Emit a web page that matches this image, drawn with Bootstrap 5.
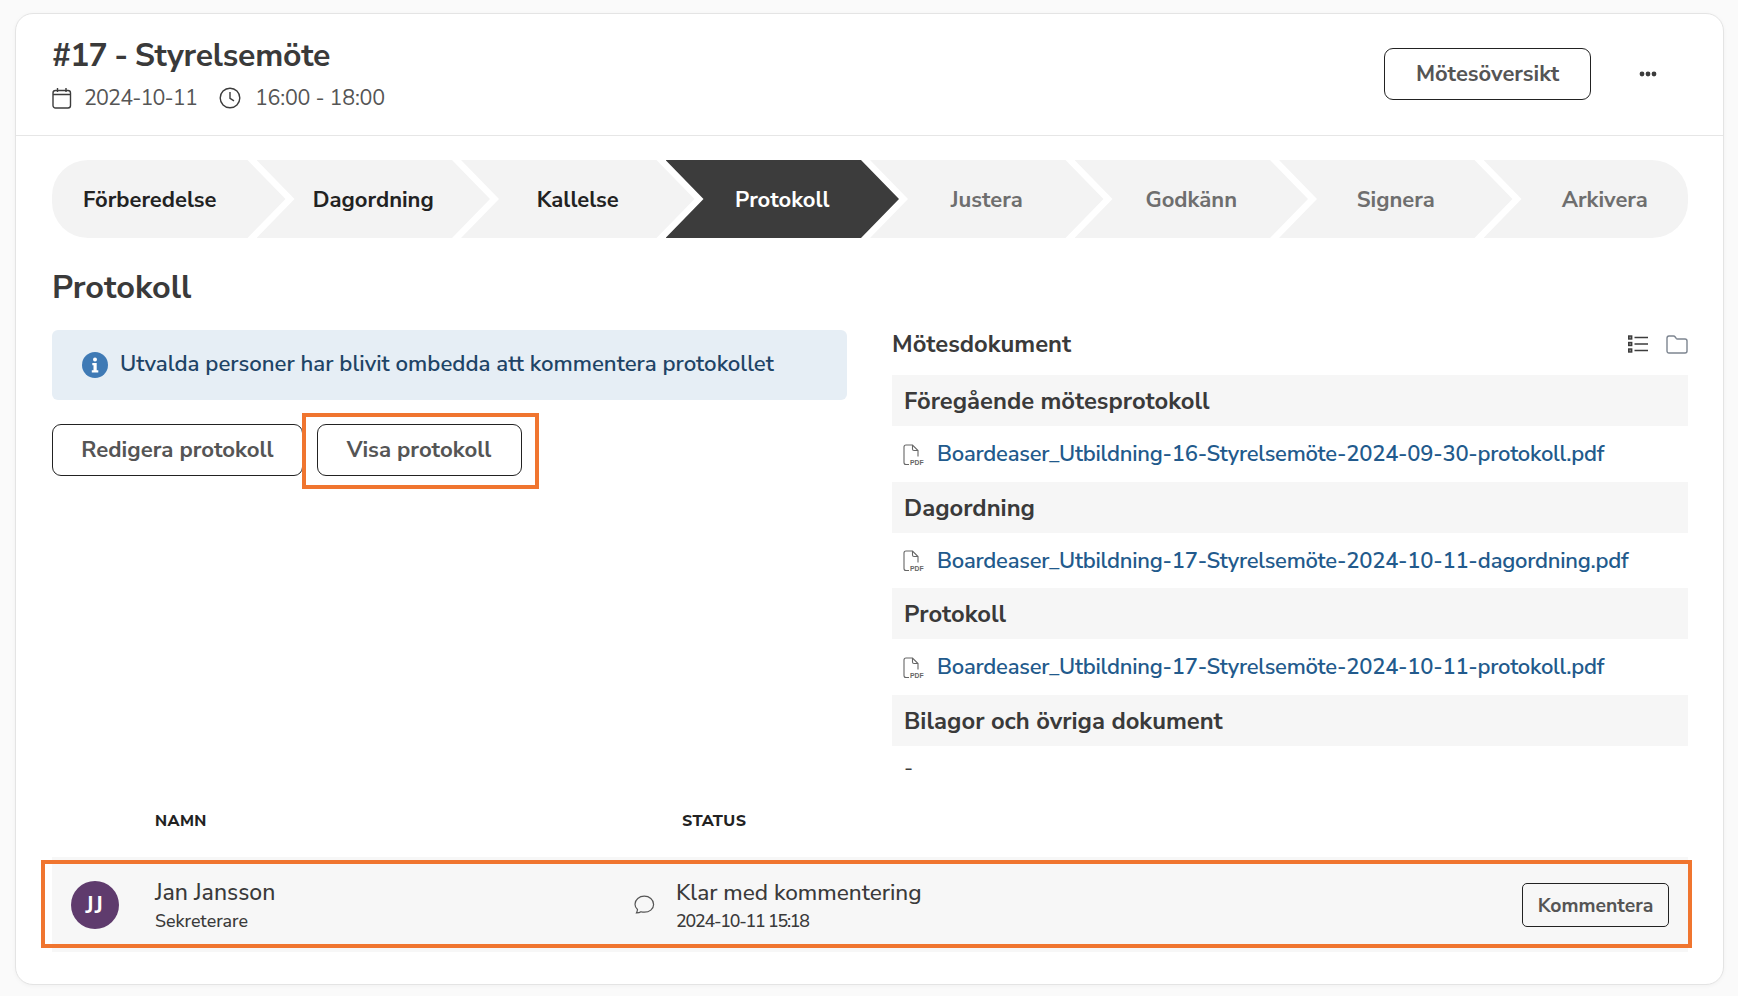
<!DOCTYPE html>
<html lang="sv">
<head>
<meta charset="utf-8">
<title>Protokoll</title>
<link href="https://cdn.jsdelivr.net/npm/bootstrap@5.3.0/dist/css/bootstrap.min.css" rel="stylesheet">
<style>
body{background:#fafafa;font-family:"Nunito Sans","Lato","Noto Sans",sans-serif;color:#3c3c3c;padding:13px 14px 12px 15px;height:996px;overflow:hidden}
.shell{background:#fff;border:1px solid #e4e4e4;border-radius:18px;box-shadow:0 1px 4px rgba(0,0,0,.04);height:972px;width:1709px}
.shell-head{height:122px;border-bottom:1px solid #e6e6e6;padding:0 66px 0 36px}
.meet-title{font-size:32px;letter-spacing:-.2px;font-weight:700;line-height:38px;margin:0 0 9px;color:#3a3a3a}
.title-num{letter-spacing:-1px}
.meet-meta{font-size:21.5px;color:#555;line-height:28px;gap:12px}
.num-text{letter-spacing:-.85px}
.time-text{letter-spacing:-.25px;margin-left:2px}
.clock-ico{margin-left:10px}
.head-right{margin-bottom:2px}
.out-btn{background:transparent;border:1px solid #222;border-radius:9px;color:#555;font-weight:700;font-size:22px;padding:0;width:207px;height:52px;line-height:50px}
.out-btn:hover{background:transparent;color:#555;border-color:#222}
.dots-btn{margin-left:48px;width:18px}
.steps{display:flex;height:78px;margin:24px 35px 0 36px;border-radius:36px;overflow:hidden}
.step{flex:0 0 233.5px;margin-right:-29px;background:#f3f3f3;display:flex;align-items:center;justify-content:center;font-size:22px;font-weight:700;padding:2px 38px 0;color:#222;clip-path:polygon(0 0,calc(100% - 38px) 0,100% 50%,calc(100% - 38px) 100%,0 100%,38px 50%)}
.step.first{clip-path:polygon(0 0,calc(100% - 38px) 0,100% 50%,calc(100% - 38px) 100%,0 100%);padding-left:0}
.step.last{flex:1 1 0;margin-right:0;padding-right:0;clip-path:polygon(0 0,100% 0,100% 100%,0 100%,38px 50%)}
.step.now{background:#3c3c3c;color:#fff}
.step.later{color:#6e6e6e}
.page-head{font-size:32.5px;font-weight:700;line-height:40px;margin:29px 36px 23px;color:#3a3a3a}
.doc-row{--bs-gutter-x:44px;margin:0 13px 0 14px;height:471px}
.note{background:#e6eef5;border-radius:6px;height:70px;padding:0 30px;margin-right:1px;font-size:22.2px;color:#1e4466;gap:12px;font-weight:600}
.line-btn{background:#fff;border:1px solid #222;border-radius:9px;color:#555;font-weight:700;font-size:22.2px;height:52px;padding:0;line-height:50px}
.line-btn:hover{background:#fff;color:#555;border-color:#222}
.edit-btn{width:251px}
.view-btn{width:205px;margin-left:13.5px}
.btn-line{margin-top:24px;position:relative}
.mark-frame{position:absolute;border:4px solid #f0752f;pointer-events:none}
.frame-view{left:250px;top:-11px;width:237px;height:76px}
.docs-head{height:45px;font-size:23.8px;font-weight:700;color:#3a3a3a;line-height:28px;padding-bottom:17px}
.view-icons{gap:18px}
.sec-bar{background:#f6f6f6;height:51px;line-height:53px;padding-left:12px;font-size:23.8px;font-weight:700;color:#3a3a3a}
.sec-item{height:55.5px;padding-left:11px;padding-top:2px;gap:12px;font-size:22px;letter-spacing:-.24px;font-weight:600}
.sec-item a{color:#225a8c;text-decoration:none}
.sec-none{padding-left:12px;font-size:21.5px;line-height:44px}
.col-heads{margin:0 35px 0 36px;height:56px;padding-bottom:16px;font-size:16px;font-weight:800;color:#222;text-transform:uppercase;letter-spacing:.4px}
.name-head{width:630px;padding-left:103px}
.person{position:relative;margin:0 35px 0 36px;height:95px;background:#f7f7f7}
.frame-row{left:-11px;top:3px;width:1651px;height:88px}
.avatar{width:48px;height:48px;border-radius:50%;background:#5f3b6d;color:#fff;font-weight:700;font-size:23px;letter-spacing:1.5px;margin-left:19px;padding-top:3px;flex:none}
.person-name{width:479px;margin-left:36px;padding-top:3px}
.big-text{font-size:22.6px;line-height:26px;color:#3a3a3a;font-weight:500}
.big-name{font-size:23px}
.small-text{font-size:17.8px;line-height:22px;margin-top:4px;color:#3a3a3a;font-weight:500}
.date-text{letter-spacing:-1.2px}
.status-wrap{margin-left:21px;padding-top:3px}
.note-btn{margin-left:auto;margin-right:19px;width:147px;height:44px;border:1px solid #222;border-radius:5px;background:transparent;color:#555;font-size:19.4px;font-weight:700;padding:0;line-height:44px}
.note-btn:hover{background:transparent;color:#555;border-color:#222}
</style>
</head>
<body>
<div class="shell">
  <div class="shell-head d-flex align-items-center justify-content-between">
    <div>
      <h1 class="meet-title"><span class="title-num">#17 - </span>Styrelsemöte</h1>
      <div class="meet-meta d-flex align-items-center">
        <svg width="20" height="22" viewBox="0 0 20 22" fill="none" stroke="#3c3c3c" stroke-width="1.4"><rect x="1" y="3.5" width="17.5" height="17.5" rx="2.5"/><path d="M1 7.5h17.5M5.5 1v4M14 1v4"/></svg>
        <span class="num-text">2024-10-11</span>
        <svg class="clock-ico" width="22" height="22" viewBox="0 0 22 22" fill="none" stroke="#3c3c3c" stroke-width="1.4"><circle cx="11" cy="11" r="9.8"/><path d="M11 5v6.3l4 2.6"/></svg>
        <span class="time-text">16:00 - 18:00</span>
      </div>
    </div>
    <div class="head-right d-flex align-items-center">
      <button class="btn out-btn" type="button">Mötesöversikt</button>
      <div class="dots-btn d-flex"><svg width="18" height="6" viewBox="0 0 18 6" fill="#3c3c3c"><circle cx="3" cy="3" r="2.4"/><circle cx="9" cy="3" r="2.4"/><circle cx="15" cy="3" r="2.4"/></svg></div>
    </div>
  </div>

  <div class="steps">
    <div class="step first">Förberedelse</div>
    <div class="step">Dagordning</div>
    <div class="step">Kallelse</div>
    <div class="step now">Protokoll</div>
    <div class="step later">Justera</div>
    <div class="step later">Godkänn</div>
    <div class="step later">Signera</div>
    <div class="step later last">Arkivera</div>
  </div>

  <h2 class="page-head">Protokoll</h2>

  <div class="row doc-row">
    <div class="col-6">
      <div class="note d-flex align-items-center">
        <svg width="26" height="26" viewBox="0 0 26 26"><circle cx="13" cy="13" r="13" fill="#3f7ab5"/><circle cx="13" cy="7.6" r="2" fill="#fff"/><path d="M10.3 11h4.4v7.2h1.6v2.2H9.8v-2.2h1.7v-5h-1.2z" fill="#fff"/></svg>
        <span>Utvalda personer har blivit ombedda att kommentera protokollet</span>
      </div>
      <div class="btn-line d-flex">
        <button class="btn line-btn edit-btn" type="button">Redigera protokoll</button>
        <button class="btn line-btn view-btn" type="button">Visa protokoll</button>
        <div class="mark-frame frame-view"></div>
      </div>
    </div>
    <div class="col-6">
      <div class="docs-head d-flex justify-content-between align-items-center">
        <span>Mötesdokument</span>
        <span class="view-icons d-flex align-items-center">
          <svg width="20" height="18" viewBox="0 0 20 18" fill="none" stroke="#3c3c3c" stroke-width="1.4"><path d="M6.5 2.5H20M6.5 9H20M6.5 15.5H20"/><rect x=".7" y="1" width="3" height="3" fill="#888"/><rect x=".7" y="7.5" width="3" height="3" fill="#888"/><rect x=".7" y="14" width="3" height="3" fill="#888"/></svg>
          <svg width="22" height="19" viewBox="0 0 22 19" fill="none" stroke="#7d8590" stroke-width="1.4"><path d="M1 3.2C1 1.900 1.900 1 3 1h4.500c.8 0 1.200.3 1.700 1l1 1.400c.3.4.7.6 1.200.6H19c1.200 0 2 .9 2 2v10c0 1.200-.8 2-2 2H3c-1.200 0-2-.8-2-2z"/></svg>
        </span>
      </div>
      <div class="sec-bar">Föregående mötesprotokoll</div>
      <div class="sec-item d-flex align-items-center">
        <svg width="22" height="22" viewBox="0 0 22 22" fill="none" stroke="#666" stroke-width="1.1"><path d="M6 20.500H3c-1.200 0-2-.8-2-2V3c0-1.200.8-2 2-2h6.500L15 6.500v6M9.500 1v4c0 1 .6 1.500 1.500 1.500h4"/><text x="7" y="20.800" font-size="6.800" letter-spacing="0" font-family="Liberation Sans,sans-serif" font-weight="700" fill="#666" stroke="none">PDF</text></svg>
        <a href="#">Boardeaser_Utbildning-16-Styrelsemöte-2024-09-30-protokoll.pdf</a>
      </div>
      <div class="sec-bar">Dagordning</div>
      <div class="sec-item d-flex align-items-center">
        <svg width="22" height="22" viewBox="0 0 22 22" fill="none" stroke="#666" stroke-width="1.1"><path d="M6 20.500H3c-1.200 0-2-.8-2-2V3c0-1.200.8-2 2-2h6.500L15 6.500v6M9.500 1v4c0 1 .6 1.500 1.500 1.500h4"/><text x="7" y="20.800" font-size="6.800" letter-spacing="0" font-family="Liberation Sans,sans-serif" font-weight="700" fill="#666" stroke="none">PDF</text></svg>
        <a href="#">Boardeaser_Utbildning-17-Styrelsemöte-2024-10-11-dagordning.pdf</a>
      </div>
      <div class="sec-bar">Protokoll</div>
      <div class="sec-item d-flex align-items-center">
        <svg width="22" height="22" viewBox="0 0 22 22" fill="none" stroke="#666" stroke-width="1.1"><path d="M6 20.500H3c-1.200 0-2-.8-2-2V3c0-1.200.8-2 2-2h6.500L15 6.500v6M9.500 1v4c0 1 .6 1.500 1.500 1.500h4"/><text x="7" y="20.800" font-size="6.800" letter-spacing="0" font-family="Liberation Sans,sans-serif" font-weight="700" fill="#666" stroke="none">PDF</text></svg>
        <a href="#">Boardeaser_Utbildning-17-Styrelsemöte-2024-10-11-protokoll.pdf</a>
      </div>
      <div class="sec-bar">Bilagor och övriga dokument</div>
      <div class="sec-none">-</div>
    </div>
  </div>

  <div class="col-heads d-flex align-items-center">
    <div class="name-head">Namn</div>
    <div>Status</div>
  </div>
  <div class="person d-flex align-items-center">
    <div class="avatar d-flex align-items-center justify-content-center">JJ</div>
    <div class="person-name">
      <div class="big-text big-name">Jan Jansson</div>
      <div class="small-text">Sekreterare</div>
    </div>
    <svg width="21" height="19" viewBox="0 0 21 19" fill="none" stroke="#555" stroke-width="1.2"><path d="M2.500 17.800c1.500 0 3.300-.3 4.500-1.100 1 .3 2.100.5 3.300.5 5 0 9.300-3 9.300-7.800S15.300 1.200 10.300 1.200 1 4.500 1 9.200c0 2.300 1 4 2.500 5.300-.1 1.300-.5 2.400-1 3.300z"/></svg>
    <div class="status-wrap">
      <div class="big-text">Klar med kommentering</div>
      <div class="small-text date-text">2024-10-11 15:18</div>
    </div>
    <button class="btn note-btn" type="button">Kommentera</button>
    <div class="mark-frame frame-row"></div>
  </div>
</div>
<script src="https://cdn.jsdelivr.net/npm/bootstrap@5.3.0/dist/js/bootstrap.bundle.min.js"></script>
</body>
</html>
